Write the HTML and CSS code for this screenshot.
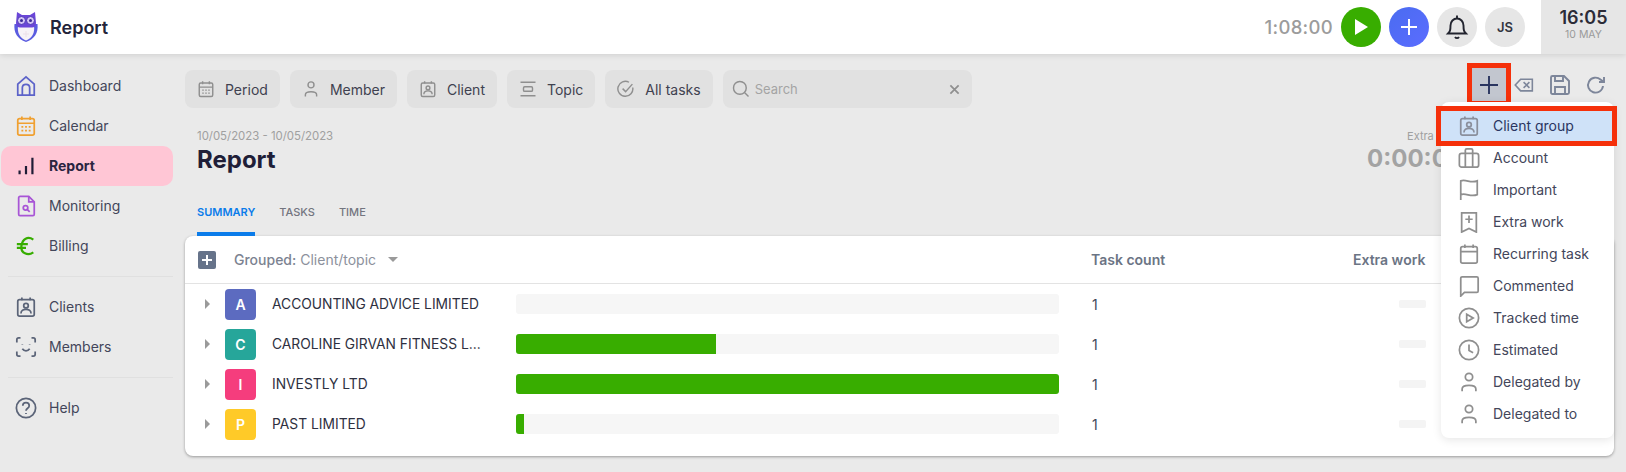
FILE: index.html
```html
<!DOCTYPE html>
<html>
<head>
<meta charset="utf-8">
<title>Report</title>
<link rel="stylesheet" href="styles.css">
</head>
<body>
<svg class="defs" width="0" height="0">
  <symbol id="i-client" viewBox="0 0 24 24"><rect x="3" y="4" width="18" height="18" rx="2"/><path d="M7.500 1.500v3M16.500 1.500v3"/><circle cx="12" cy="10.500" r="2.500"/><path d="M6.500 19c0-6 11-6 11 0"/></symbol>
  <symbol id="i-person" viewBox="0 0 24 24"><circle cx="12" cy="6.500" r="4"/><path d="M4.500 22v-2.500c0-5 15-5 15 0V22"/></symbol>
  <symbol id="i-cal" viewBox="0 0 24 24"><rect x="3" y="4" width="18" height="18" rx="2"/><path d="M3 9.500h18M7.500 1.500v4M16.500 1.500v4"/></symbol>
</svg>

<header class="topbar">
  <svg class="logo" viewBox="0 0 26 32">
    <path d="M1.500 13c-1 9 3 15 11.500 18 8.500-3 12.500-9 11.500-18z" fill="#5a5ce0"/>
    <path d="M5 15h16c1 7-2 12-8 14.500C7 27 4 22 5 15z" fill="#f7f2f7"/>
    <path d="M4 1l5 3h8l5-3 1 11c0 3-2 4.500-4 4.500H7c-2 0-4-1.500-4-4.500z" fill="#6a45d8"/>
    <circle cx="8.500" cy="9.500" r="4" fill="#d3c4f5" stroke="#4b35b5" stroke-width="1"/>
    <circle cx="17.500" cy="9.500" r="4" fill="#d3c4f5" stroke="#4b35b5" stroke-width="1"/>
    <circle cx="8.500" cy="9.500" r="1.500" fill="#3a2a96"/>
    <circle cx="17.500" cy="9.500" r="1.500" fill="#3a2a96"/>
    <path d="M13 20v6M10 23h6" stroke="#ecdfe8" stroke-width="1"/>
  </svg>
  <div class="topbar-title">Report</div>
  <div class="topbar-right">
    <span class="timer">1:08:00</span>
    <span class="round green"><svg width="16" height="18" viewBox="0 0 16 18"><path d="M2 1l13 8-13 8z" fill="#fff"/></svg></span>
    <span class="round blue"><svg width="20" height="20" viewBox="0 0 20 20"><path d="M10 2v16M2 10h16" stroke="#fff" stroke-width="2"/></svg></span>
    <span class="round grey"><svg width="24" height="26" viewBox="0 0 24 26" fill="none" stroke="#22242f" stroke-width="1.800"><path d="M3 19.500c2-2 2.500-3 2.500-8 0-4 3-7 6.500-7s6.500 3 6.500 7c0 5 .5 6 2.500 8z"/><path d="M12 1.500v3M10 23c1 1.500 3 1.500 4 0"/></svg></span>
    <span class="round grey initials">JS</span>
  </div>
  <div class="clock">
    <div class="clock-time">16:05</div>
    <div class="clock-date">10 MAY</div>
  </div>
</header>

<div class="main">
  <nav class="sidebar">
    <a class="nav-item"><svg viewBox="0 0 24 24" stroke="#5c63c9"><path d="M3 10l9-8 9 8v12H3z"/><path d="M8 22v-8c0-5 8-5 8 0v8"/></svg>Dashboard</a>
    <a class="nav-item"><svg viewBox="0 0 24 24" stroke="#f0a030"><rect x="3" y="4" width="18" height="18" rx="2"/><path d="M3 9h18M7.500 1.500v4M16.500 1.500v4M7 13h2M11 13h2M15 13h2M7 17h2M11 17h2M15 17h2"/></svg>Calendar</a>
    <a class="nav-item active"><svg class="bars" viewBox="0 0 24 24" stroke="#1f1d36"><path d="M5 21v-4M12 21v-9M19 21V3"/></svg>Report</a>
    <a class="nav-item"><svg viewBox="0 0 24 24" stroke="#a855d6"><path d="M4 3a1.500 1.500 0 0 1 1.500-1.500H15l6 6V21a1.500 1.500 0 0 1-1.500 1.500h-14A1.500 1.500 0 0 1 4 21z"/><path d="M15 1.500V7.500h6"/><circle cx="11.500" cy="14" r="2.500"/><path d="M13.500 16l2.500 2.500"/></svg>Monitoring</a>
    <a class="nav-item"><svg class="bars" viewBox="0 0 24 24" stroke="#37ad00"><path d="M20 5c-6-4-12-1-13 7s7 11 13 7M2 10h12M2 14h10"/></svg>Billing</a>
    <div class="nav-line"></div>
    <a class="nav-item"><svg class="client-ico" stroke="#5b6478"><use href="#i-client"/></svg>Clients</a>
    <a class="nav-item"><svg viewBox="0 0 24 24" stroke="#5b6478"><path d="M2 7V4a2 2 0 0 1 2-2h2M18 2h2a2 2 0 0 1 2 2v3M2 17v3a2 2 0 0 0 2 2h2M18 22h2a2 2 0 0 0 2-2v-3M8 14c2 3 6 3 8 0M8 9v.500M16 9v.500"/></svg>Members</a>
    <div class="nav-line"></div>
    <a class="nav-item"><svg viewBox="0 0 24 24" stroke="#5b6478"><circle cx="12" cy="12" r="10.500"/><path d="M8.500 9.500c0-4.500 7-4.500 7 0 0 3-3.500 2.500-3.500 5.500M12 17.500v1"/></svg>Help</a>
  </nav>

  <div class="content">
    <div class="toolbar">
      <div class="chip"><svg viewBox="0 0 24 24" stroke="#8f8f8f"><rect x="3" y="4" width="18" height="18" rx="2"/><path d="M3 9.500h18M7.500 1.500v4M16.500 1.500v4M7 13.500h2M11 13.500h2M15 13.500h2M7 17.500h2M11 17.500h2M15 17.500h2"/></svg>Period</div>
      <div class="chip"><svg stroke="#8f8f8f"><use href="#i-person"/></svg>Member</div>
      <div class="chip"><svg stroke="#8f8f8f"><use href="#i-client"/></svg>Client</div>
      <div class="chip"><svg viewBox="0 0 24 24" stroke="#8f8f8f"><path d="M2 3h20M2 21h20"/><rect x="6" y="9" width="12" height="6" rx="1.500"/></svg>Topic</div>
      <div class="chip"><svg viewBox="0 0 24 24" stroke="#8f8f8f"><path d="M21 10a10 10 0 1 1-5-7"/><path d="M7.500 11.500l4 4 9-10"/></svg>All tasks</div>
      <div class="search">
        <svg viewBox="0 0 24 24" stroke="#8f8f8f"><circle cx="10.500" cy="10.500" r="8.500"/><path d="M17 17l5 5"/></svg>
        <span class="search-text">Search</span>
        <svg class="search-x" viewBox="0 0 12 12" stroke="#8f8f8f"><path d="M1.500 1.500l9 9M10.500 1.500l-9 9"/></svg>
      </div>
      <div class="tools">
        <span class="tool tool-add"><svg viewBox="0 0 20 20" stroke="#2a3560"><path d="M10 1v18M1 10h18"/></svg></span>
        <span class="tool"><svg viewBox="0 0 24 18" stroke="#7d869a"><path d="M8 2h14v14H8l-6.500-7z"/><path d="M11.500 5.500l7 7M18.500 5.500l-7 7"/></svg></span>
        <span class="tool"><svg viewBox="0 0 20 20" stroke="#7d869a"><path d="M1 2.500A1.500 1.500 0 0 1 2.500 1H14l5 5v11.500a1.500 1.500 0 0 1-1.500 1.500h-15A1.500 1.500 0 0 1 1 17.500z"/><path d="M5 1v5h8V1M5 19v-7h10v7"/></svg></span>
        <span class="tool"><svg viewBox="0 0 20 20" stroke="#7d869a"><path d="M17 11a7.500 7.500 0 1 1-2.500-6.500L18 7"/><path d="M18 2v5h-5"/></svg></span>
      </div>
    </div>

    <div class="heading">
      <div>
        <div class="date-range">10/05/2023 - 10/05/2023</div>
        <h1>Report</h1>
      </div>
      <div class="extra">
        <div class="extra-label">Extra work</div>
        <div class="extra-time">0:00:00</div>
      </div>
    </div>

    <div class="tabs">
      <span class="tab on">SUMMARY</span>
      <span class="tab">TASKS</span>
      <span class="tab">TIME</span>
    </div>

    <div class="card">
      <div class="card-head">
        <span class="expand"><svg width="12" height="12" viewBox="0 0 12 12"><path d="M6 1v10M1 6h10" stroke="#fff" stroke-width="2"/></svg></span>
        <span class="grouped"><b>Grouped:</b> Client/topic</span>
        <span class="caret"></span>
        <span class="col-count">Task count</span>
        <span class="col-extra">Extra work</span>
      </div>

      <div class="row">
        <span class="arrow-cell"><i class="arrow"></i></span>
        <span class="avatar indigo">A</span>
        <span class="name-cell"><span class="name">ACCOUNTING ADVICE LIMITED</span></span>
        <span class="bar"></span>
        <span class="count">1</span>
        <span class="pill"></span>
      </div>
      <div class="row">
        <span class="arrow-cell"><i class="arrow"></i></span>
        <span class="avatar teal">C</span>
        <span class="name-cell"><span class="name">CAROLINE GIRVAN FITNESS LIMITED</span></span>
        <span class="bar"><i class="fill" style="width:36.900%"></i></span>
        <span class="count">1</span>
        <span class="pill"></span>
      </div>
      <div class="row">
        <span class="arrow-cell"><i class="arrow"></i></span>
        <span class="avatar pink">I</span>
        <span class="name-cell"><span class="name">INVESTLY LTD</span></span>
        <span class="bar"><i class="fill" style="width:100%"></i></span>
        <span class="count">1</span>
        <span class="pill"></span>
      </div>
      <div class="row">
        <span class="arrow-cell"><i class="arrow"></i></span>
        <span class="avatar yellow">P</span>
        <span class="name-cell"><span class="name">PAST LIMITED</span></span>
        <span class="bar"><i class="fill" style="width:1.500%"></i></span>
        <span class="count">1</span>
        <span class="pill"></span>
      </div>
    </div>

    <div class="menu">
      <div class="menu-item selected"><svg stroke="#8a8f9c"><use href="#i-client"/></svg>Client group</div>
      <div class="menu-item"><svg viewBox="0 0 24 24" stroke="#8f8f8f"><rect x="1.500" y="7" width="21" height="15" rx="2.500"/><path d="M8 22V3.500A1.500 1.500 0 0 1 9.500 2h5A1.500 1.500 0 0 1 16 3.500V22"/></svg>Account</div>
      <div class="menu-item"><svg viewBox="0 0 24 24" stroke="#8f8f8f"><path d="M3 23V2c6-2 11 3 18 0v15c-7 3-12-2-18 0"/></svg>Important</div>
      <div class="menu-item"><svg viewBox="0 0 24 24" stroke="#8f8f8f"><path d="M4 2h16v21l-8-4-8 4z"/><path d="M12 5v8M8 9h8"/></svg>Extra work</div>
      <div class="menu-item"><svg stroke="#8f8f8f"><use href="#i-cal"/></svg>Recurring task</div>
      <div class="menu-item"><svg viewBox="0 0 24 24" stroke="#8f8f8f"><path d="M3 3.500A1.500 1.500 0 0 1 4.500 2h16A1.500 1.500 0 0 1 22 3.500v14a1.500 1.500 0 0 1-1.500 1.500H7l-4 4z"/></svg>Commented</div>
      <div class="menu-item"><svg viewBox="0 0 24 24" stroke="#8f8f8f"><circle cx="12" cy="12" r="10.500"/><path d="M9.500 8l7 4-7 4z"/></svg>Tracked time</div>
      <div class="menu-item"><svg viewBox="0 0 24 24" stroke="#8f8f8f"><circle cx="12" cy="12" r="10.500"/><path d="M12 6v6.500l4.500 2.500"/></svg>Estimated</div>
      <div class="menu-item"><svg stroke="#8f8f8f"><use href="#i-person"/></svg>Delegated by</div>
      <div class="menu-item"><svg stroke="#8f8f8f"><use href="#i-person"/></svg>Delegated to</div>
    </div>
  </div>
</div>
</body>
</html>
```

FILE: styles.css
```css
* {
  box-sizing: border-box;
}

body {
  margin: 0;
  height: 472px;
  overflow: hidden;
  background: #eaeaea;
  font-family: Inter, "Liberation Sans", sans-serif;
  color: #43465a;
  font-size: 14px;
}

svg {
  fill: none;
  stroke-width: 1.900;
  flex: none;
}

.defs {
  position: absolute;
}

/* top bar */
.topbar {
  display: flex;
  align-items: center;
  height: 54px;
  background: #fff;
  box-shadow: 0 1px 6px rgba(0, 0, 0, .12);
  position: relative;
  padding-left: 13px;
}

.logo {
  width: 26px;
  height: 32px;
  stroke-width: 0;
}

.topbar-title {
  margin-left: 11px;
  font-size: 18px;
  font-weight: 600;
  color: #23243a;
}

.topbar-right {
  margin-left: auto;
  display: flex;
  align-items: center;
  gap: 8px;
  padding-right: 16px;
}

.timer {
  font-size: 18.500px;
  font-weight: 500;
  color: #9c9c9c;
  letter-spacing: .3px;
}

.round {
  width: 40px;
  height: 40px;
  border-radius: 50%;
  display: flex;
  align-items: center;
  justify-content: center;
}

.green { background: #38ad00; }
.blue { background: linear-gradient(135deg, #4a6cf0, #5b6cff); }
.grey { background: #e6e6e6; }

.initials {
  font-size: 13px;
  font-weight: 600;
  color: #33343f;
}

.clock {
  width: 85px;
  height: 54px;
  background: #e6e6e6;
  text-align: center;
  padding-top: 7px;
}

.clock-time {
  font-size: 18px;
  font-weight: 600;
  line-height: 21px;
  color: #2c2c38;
}

.clock-date {
  font-size: 10.500px;
  line-height: 14px;
  color: #9a9a9a;
}

/* sidebar */
.main {
  display: flex;
}

.sidebar {
  width: 173px;
  flex: none;
  padding: 12px 0 0 1px;
}

.nav-item {
  display: flex;
  align-items: center;
  height: 40px;
  padding: 0 0 1px 14px;
  border-radius: 10px;
  gap: 12px;
}

.nav-item svg {
  width: 22px;
  height: 22px;
}

.nav-item svg.bars {
  stroke-width: 2.400;
}

.nav-item.active {
  background: #ffc6d5;
  font-weight: 700;
  color: #2a2440;
}

.nav-line {
  height: 1px;
  background: #e0e0e0;
  margin: 10px 0 10px 7px;
}

/* filters */
.content {
  flex: 1;
  padding: 16px 12px 0;
  position: relative;
  min-width: 0;
}

.toolbar {
  display: flex;
  gap: 10px;
  height: 38px;
}

.chip {
  display: flex;
  align-items: center;
  gap: 10px;
  height: 38px;
  padding: 0 12px;
  border-radius: 8px;
  background: #e1e1e1;
  color: #3f4150;
}

.chip svg {
  width: 18px;
  height: 18px;
}

.search {
  display: flex;
  align-items: center;
  width: 249px;
  height: 38px;
  padding: 0 12px 0 9px;
  border-radius: 8px;
  background: #e1e1e1;
}

.search svg {
  width: 18px;
  height: 18px;
}

.search-text {
  margin-left: 5px;
  font-size: 13px;
  color: #a4a4a4;
}

.search svg.search-x {
  width: 11px;
  height: 11px;
  margin-left: auto;
}

.tools {
  margin-left: auto;
  margin-top: -2px;
  display: flex;
  height: 33px;
}

.tool {
  width: 36px;
  height: 33px;
  display: flex;
  align-items: center;
  justify-content: center;
}

.tool svg {
  width: 20px;
  height: 20px;
}

.tool-add {
  width: 34px;
  background: #c2c6cf;
  outline: 5px solid #f5300a;
}

/* heading */
.heading {
  display: flex;
  justify-content: space-between;
  padding: 20px 0 0 12px;
}

.date-range {
  font-size: 11.400px;
  line-height: 16px;
  color: #a0a0a0;
}

h1 {
  margin: 0;
  font-size: 24px;
  line-height: 32px;
  font-weight: 700;
  color: #1f1e38;
}

.extra {
  margin-right: 150px;
}

.extra-label {
  font-size: 11px;
  line-height: 16px;
  color: #a0a0a0;
  margin-left: 40px;
}

.extra-time {
  font-size: 24px;
  line-height: 30px;
  font-weight: 700;
  color: #a3a3a3;
}

/* tabs */
.tabs {
  display: flex;
  gap: 24px;
  margin: 28px 0 0 12px;
}

.tab {
  height: 32px;
  font-size: 11px;
  font-weight: 500;
  line-height: 16px;
  color: #73757f;
}

.tab.on {
  color: #0b7cea;
  font-weight: 600;
  border-bottom: 4px solid #0b7cea;
}

/* table card */
.card {
  height: 220px;
  background: #fff;
  border-radius: 8px;
  box-shadow: 0 1px 3px rgba(0, 0, 0, .35);
}

.card-head {
  display: flex;
  align-items: center;
  height: 48px;
  padding-left: 13px;
  border-bottom: 1px solid #e3e3e3;
  color: #6b7484;
  font-weight: 600;
}

.expand {
  width: 18px;
  height: 18px;
  background: #66738a;
  border-radius: 2px;
  display: flex;
  align-items: center;
  justify-content: center;
}

.grouped {
  margin-left: 18px;
  color: #8c919c;
  font-weight: 400;
}

.grouped b {
  font-weight: 500;
  color: #7c8391;
}

.caret {
  margin-left: 12px;
  border-left: 5px solid transparent;
  border-right: 5px solid transparent;
  border-top: 5px solid #9a9a9a;
}

.col-count {
  position: absolute;
  left: 918px;
}

.col-extra {
  position: absolute;
  left: 1180px;
}

.row {
  display: flex;
  align-items: center;
  height: 40px;
}

.arrow-cell {
  width: 40px;
  padding-left: 20px;
}

.arrow {
  display: block;
  width: 0;
  border-top: 5px solid transparent;
  border-bottom: 5px solid transparent;
  border-left: 5px solid #9a9a9a;
}

.avatar {
  width: 31px;
  height: 31px;
  border-radius: 4px;
  display: flex;
  align-items: center;
  justify-content: center;
  color: #fff;
  font-weight: 600;
  font-size: 14px;
}

.indigo { background: #5c6bc0; }
.teal { background: #26a69a; }
.pink { background: #f53d7d; }
.yellow { background: #ffca28; }

.name-cell {
  width: 260px;
  padding-left: 16px;
  flex: none;
}

.name {
  display: block;
  width: 212px;
  font-size: 13.800px;
  white-space: nowrap;
  overflow: hidden;
  text-overflow: ellipsis;
  color: #2e3040;
}

.bar {
  width: 543px;
  height: 20px;
  background: #f6f6f6;
  border-radius: 3px;
  overflow: hidden;
}

.fill {
  display: block;
  height: 100%;
  background: #38ad00;
}

.count {
  margin-left: 33px;
  width: 307px;
}

.pill {
  width: 27px;
  height: 8px;
  background: #f4f4f4;
  border-radius: 2px;
}

/* add-column dropdown */
.menu {
  position: absolute;
  top: 48px;
  left: 1268px;
  width: 173px;
  height: 336px;
  padding-top: 9px;
  background: #fff;
  border-radius: 8px;
  box-shadow: 0 2px 10px rgba(0, 0, 0, .1);
}

.menu-item {
  display: flex;
  align-items: center;
  gap: 13px;
  height: 32px;
  padding: 0 0 1px 17px;
}

.menu-item svg {
  width: 22px;
  height: 22px;
}

.menu-item.selected {
  height: 30px;
  margin: 0 2px 1px 0;
  background: #cfe2f8;
  outline: 5px solid #f5300a;
  color: #2a3560;
}
```
